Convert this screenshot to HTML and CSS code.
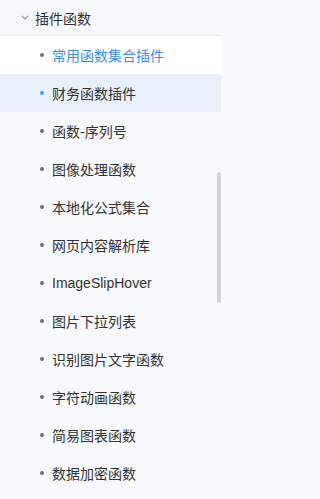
FILE: index.html
```html
<!DOCTYPE html>
<html lang="zh-CN">
<head>
<meta charset="utf-8">
<link rel="stylesheet" href="styles.css">
</head>
<body>
<div class="menu">
  <div class="group-title">
    <svg class="chev" width="8" height="5" viewBox="0 0 8 5"><path d="M0.8 0.8 L4 4 L7.2 0.8" fill="none" stroke="#8a8f99" stroke-width="1.1"/></svg>
    <span>插件函数</span>
  </div>
  <ul class="items">
    <li class="item current"><i class="dot"></i><span>常用函数集合插件</span></li>
    <li class="item hover"><i class="dot"></i><span>财务函数插件</span></li>
    <li class="item"><i class="dot"></i><span>函数-序列号</span></li>
    <li class="item"><i class="dot"></i><span>图像处理函数</span></li>
    <li class="item"><i class="dot"></i><span>本地化公式集合</span></li>
    <li class="item"><i class="dot"></i><span>网页内容解析库</span></li>
    <li class="item"><i class="dot"></i><span>ImageSlipHover</span></li>
    <li class="item"><i class="dot"></i><span>图片下拉列表</span></li>
    <li class="item"><i class="dot"></i><span>识别图片文字函数</span></li>
    <li class="item"><i class="dot"></i><span>字符动画函数</span></li>
    <li class="item"><i class="dot"></i><span>简易图表函数</span></li>
    <li class="item"><i class="dot"></i><span>数据加密函数</span></li>
  </ul>
  <div class="scrollbar"></div>
</div>
</body>
</html>
```
FILE: styles.css
```css
html, body {
  margin: 0;
  padding: 0;
  background: #f7f9fc;
}
.menu {
  position: relative;
  width: 221px;
  height: 499px;
  overflow: hidden;
  font-family: "Liberation Sans", "Noto Sans CJK SC", sans-serif;
  font-size: 14px;
  color: #333333;
}
.group-title {
  height: 35px;
  display: flex;
  align-items: center;
  padding-left: 21px;
  gap: 6px;
  background: #f6f8fb;
  border-bottom: 1px solid #e9ecf1;
  color: #333333;
}
.chev {
  display: block;
}
.items {
  list-style: none;
  margin: 0;
  padding: 0;
}
.item {
  height: 38px;
  display: flex;
  align-items: center;
  padding-left: 40px;
  gap: 8px;
}
.dot {
  width: 4px;
  height: 4px;
  border-radius: 50%;
  background: #6b7280;
  flex: none;
}
.item.current {
  background: #ffffff;
  color: #3a8ee6;
}
.item.hover {
  background: #e8f0fc;
}
.item.hover .dot {
  background: #409eff;
}
.scrollbar {
  position: absolute;
  left: 217px;
  top: 172px;
  width: 4px;
  height: 131px;
  border-radius: 2px;
  background: #d3d3d3;
}
```
